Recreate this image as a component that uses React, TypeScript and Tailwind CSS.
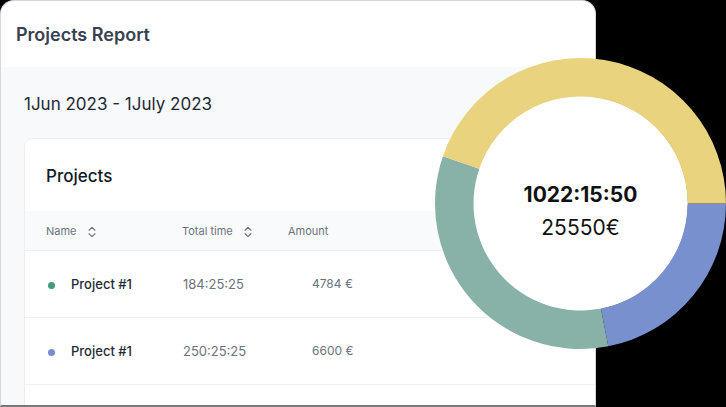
import React from "react";
import { ChevronsUpDown } from "lucide-react";

const CX = 145.5;
const CY = 145.5;
const R = 145.5;
const r = 107;

function pt(rad: number, deg: number) {
  const a = (deg * Math.PI) / 180;
  return [CX + rad * Math.cos(a), CY + rad * Math.sin(a)];
}

function sector(a0: number, a1: number) {
  const large = a1 - a0 > 180 ? 1 : 0;
  const [x0, y0] = pt(R, a0);
  const [x1, y1] = pt(R, a1);
  const [x2, y2] = pt(r, a1);
  const [x3, y3] = pt(r, a0);
  return `M${x0} ${y0} A${R} ${R} 0 ${large} 1 ${x1} ${y1} L${x2} ${y2} A${r} ${r} 0 ${large} 0 ${x3} ${y3} Z`;
}

function Donut() {
  return (
    <div className="absolute left-[435px] top-[58px] h-[291px] w-[291px]">
      <svg width="291" height="291" viewBox="0 0 291 291" className="absolute inset-0">
        <circle cx={CX} cy={CY} r={r + 0.5} fill="#ffffff" />
        <path d={sector(0, 79)} fill="#7890CE" />
        <path d={sector(79, 199)} fill="#88B2A7" />
        <path d={sector(199, 360)} fill="#E9D37E" />
      </svg>
      <div className="absolute inset-0 flex flex-col items-center justify-center pt-[16px]">
        <div className="text-[21px] font-bold leading-[26px] text-[#111111]">1022:15:50</div>
        <div className="mt-[7px] text-[21px] font-normal leading-[26px] text-[#111111]">25550€</div>
      </div>
    </div>
  );
}

function Row({ color, time, amount }: { color: string; time: string; amount: string }) {
  return (
    <div className="flex h-[67px] items-center border-b border-[#eef0f2] pl-[22px] pt-[2px]">
      <div className="flex w-[136px] items-center">
        <span className="ml-[1px] h-[7px] w-[7px] rounded-full" style={{ backgroundColor: color }} />
        <span className="ml-[16px] text-[13px] font-medium text-[#1f2937]">Project #1</span>
      </div>
      <div className="w-[129px] text-[13px] text-[#6b7280]">{time}</div>
      <div className="-mt-[3px] text-[12px] text-[#6b7280]">{amount}</div>
    </div>
  );
}

export default function App() {
  return (
    <div className="relative h-[407px] w-[726px] overflow-hidden bg-black" style={{ fontFamily: "Inter, 'Noto Sans', sans-serif" }}>
      <div className="flex h-[407px] w-[596px] flex-col overflow-hidden rounded-t-[14px] border border-b-2 border-[#d4d7dc] border-b-[#7a7a7a] bg-white">
        <div className="flex h-[66px] shrink-0 items-center pl-[15px]">
          <h1 className="text-[18px] font-semibold text-[#374151]">Projects Report</h1>
        </div>
        <div className="flex-1 bg-[#f8f9fb] pl-[23px]">
          <div className="flex h-[71px] items-center pt-[4px]">
            <span className="text-[17px] text-[#1f2937]">1Jun 2023 - 1July 2023</span>
          </div>
          <div className="w-[640px] rounded-tl-[9px] border border-[#eceef1] bg-white">
            <div className="flex h-[72px] items-center pl-[21px] pt-[4px]">
              <span className="text-[17px] font-medium text-[#111827]">Projects</span>
            </div>
            <div className="flex h-[40px] items-center border-b border-[#eef0f2] bg-[#f9fafb] pl-[21px] pt-[2px] text-[11px] text-[#6b7280]">
              <div className="flex w-[136px] items-center">
                <span>Name</span>
                <ChevronsUpDown className="ml-[8px] h-[14px] w-[14px]" strokeWidth={2} />
              </div>
              <div className="flex w-[106px] items-center">
                <span>Total time</span>
                <ChevronsUpDown className="ml-[8px] h-[14px] w-[14px]" strokeWidth={2} />
              </div>
              <span>Amount</span>
            </div>
            <Row color="#45987a" time="184:25:25" amount="4784 €" />
            <Row color="#7a8dd0" time="250:25:25" amount="6600 €" />
            <div className="h-[40px]" />
          </div>
        </div>
      </div>
      <Donut />
    </div>
  );
}
